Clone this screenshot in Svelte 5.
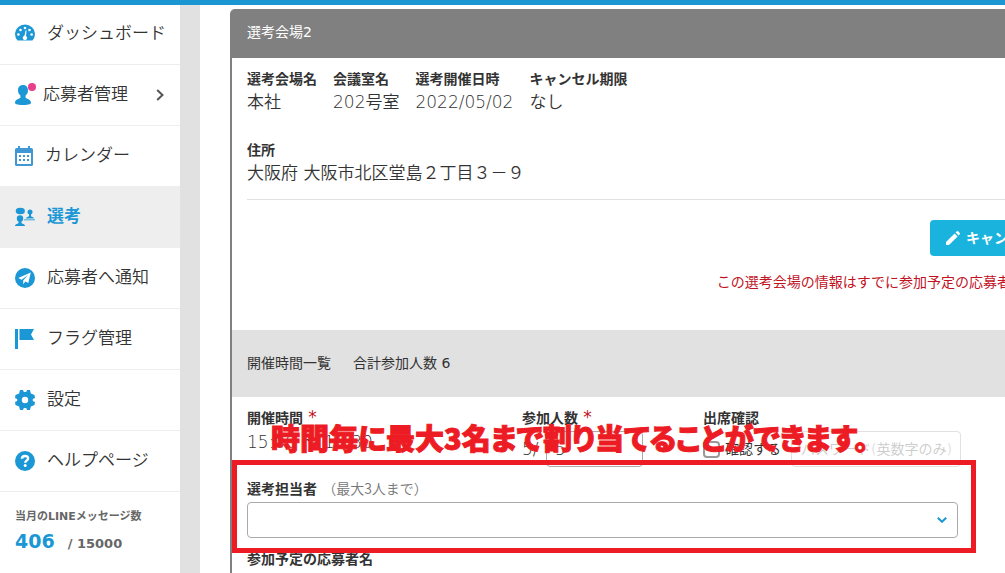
<script>
  const menu = [
    { id: 'dashboard', label: 'ダッシュボード', width: 20 },
    { id: 'applicants', label: '応募者管理', width: 16, badge: true, arrow: true },
    { id: 'calendar', label: 'カレンダー', width: 18 },
    { id: 'selection', label: '選考', width: 20, active: true },
    { id: 'notice', label: '応募者へ通知', width: 20 },
    { id: 'flag', label: 'フラグ管理', width: 20 },
    { id: 'settings', label: '設定', width: 20 },
    { id: 'help', label: 'ヘルプページ', width: 20 }
  ];

  const venue = [
    { label: '選考会場名', value: '本社' },
    { label: '会議室名', value: '202号室' },
    { label: '選考開催日時', value: '2022/05/02' },
    { label: 'キャンセル期限', value: 'なし' }
  ];

  let capacity = $state('5');
  let attendance = $state(false);
  let password = $state('');
  let staff = $state('');
</script>

<div class="topbar"></div>
<div class="page">
  <aside class="sidebar">
    <nav>
      {#each menu as item (item.id)}
        <a href="#{item.id}" class="menu-item" class:active={item.active}>
          <span class="menu-icon">
            <svg viewBox="0 0 {item.width} 20" width={item.width} height="20" aria-hidden="true">
              {#if item.id === 'dashboard'}
                <path d="M2.6 16.500A10 9.500 0 1 1 17.400 16.500Z" />
                <g fill="#fff">
                  <circle cx="10" cy="4" r="1.3" />
                  <circle cx="5.5" cy="6" r="1.3" />
                  <circle cx="14.5" cy="6" r="1.3" />
                  <circle cx="3.4" cy="10.5" r="1.3" />
                  <circle cx="16.6" cy="10.5" r="1.3" />
                  <path d="M10.6 6.4l1 .2-.6 5.400a2.200 2.200 0 1 1-1.600-.2z" />
                </g>
              {:else if item.id === 'applicants'}
                <path d="M8 0c3.2 0 5 2.2 5 5.2 0 2.3-1 4.3-2.4 5.3v2c0 1.2 5.4 1.7 5.4 5 0 1.5-1.5 2.5-8 2.5s-8-1-8-2.5c0-3.3 5.4-3.8 5.4-5v-2C4 9.500 3 7.500 3 5.200 3 2.200 4.800 0 8 0z" />
              {:else if item.id === 'calendar'}
                <g fill="#3f97d3">
                  <path fill-rule="evenodd" d="M1.5 2H3V0h2v2h8V0h2v2h1.5A1.5 1.5 0 0 1 18 3.5v15a1.5 1.5 0 0 1-1.5 1.5h-15A1.5 1.5 0 0 1 0 18.5v-15A1.5 1.5 0 0 1 1.5 2zM2 7v11h14V7z" />
                  <path d="M4 9h2v2H4zM8 9h2v2H8zM12 9h2v2h-2zM4 13h2v2H4zM8 13h2v2H8zM12 13h2v2h-2z" />
                </g>
              {:else if item.id === 'selection'}
                <ellipse cx="5.3" cy="4" rx="4.6" ry="3.2" />
                <circle cx="5" cy="11.5" r="3.2" />
                <path d="M3.5 13h3v3c0 1 3.5.8 3.5 3H0c0-2.2 3.5-2 3.5-3z" />
                <circle cx="15" cy="5" r="2.5" />
                <path d="M14 7h2v2c0 .8 3 .8 3 2.5h-8c0-1.7 3-1.7 3-2.5z" />
                <path d="M9 12h11v1.5H9z" opacity=".55" />
              {:else if item.id === 'notice'}
                <circle cx="10" cy="10" r="10" />
                <path fill="#fff" d="M15.8 4.4L3.2 10l3.5 1.8 6.2-4.9-4.7 5.6v3.7l2.1-2.6 3 1.4z" />
              {:else if item.id === 'flag'}
                <path d="M0 0h3v20H0zM4.5 0H19l-3 5.5 3 5.5H4.5z" />
              {:else if item.id === 'settings'}
                <path fill-rule="evenodd" d="M5 0h3l.8 2h2.4L12 0h3l.9 3.5L19.5 5 20 8l-2.2 1v2l2.2 1-.5 3-3.600 1.500L15 20h-3l-.8-2H8.800L8 20H5l-.9-3.500L.5 15 0 12l2.200-1V9L0 8l.5-3 3.600-1.500zM10 6.800a3.200 3.200 0 1 0 0 6.400 3.200 3.200 0 0 0 0-6.400z" />
              {:else}
                <circle cx="10" cy="10" r="10" />
                <path fill="none" stroke="#fff" stroke-width="2.4" d="M6.9 7.8C7 5.9 8.3 5 10 5c1.8 0 3.1 1 3.1 2.5 0 2.1-2.9 2.1-2.9 4.3" />
                <circle cx="10.2" cy="14.5" r="1.5" fill="#fff" />
              {/if}
            </svg>
            {#if item.badge}<span class="badge"></span>{/if}
          </span>
          <span class="menu-label">{item.label}</span>
          {#if item.arrow}
            <svg class="arrow" viewBox="0 0 8 12" width="8" height="12" aria-hidden="true">
              <path d="M1.2 1l5.3 5-5.3 5" />
            </svg>
          {/if}
        </a>
      {/each}
    </nav>
    <div class="usage">
      <div class="usage-title">当月のLINEメッセージ数</div>
      <div class="usage-count"><strong>406</strong><span>/ 15000</span></div>
    </div>
  </aside>

  <main>
    <section class="card">
      <header class="card-header">選考会場2</header>

      <div class="card-body">
        <dl class="info">
          {#each venue as field (field.label)}
            <div>
              <dt>{field.label}</dt>
              <dd>{field.value}</dd>
            </div>
          {/each}
        </dl>
        <dl class="info">
          <div>
            <dt>住所</dt>
            <dd>大阪府 大阪市北区堂島２丁目３－９</dd>
          </div>
        </dl>
        <div class="actions">
          <button type="button" class="btn">
            <svg viewBox="0 0 16 16" width="16" height="16" aria-hidden="true">
              <path d="M1 12v3h3l8.6-8.6-3-3zM10.6 2.4l3 3 1.2-1.2a1 1 0 0 0 0-1.3l-1.7-1.7a1 1 0 0 0-1.3 0z" />
            </svg>
            <span>キャンセル</span>
          </button>
          <p class="warning">この選考会場の情報はすでに参加予定の応募者がいる</p>
        </div>
      </div>

      <div class="summary">
        <span>開催時間一覧</span>
        <span>合計参加人数 6</span>
      </div>

      <div class="slot">
        <div class="slot-row">
          <div>
            <div class="label">開催時間 <span class="required">*</span></div>
            <div class="time">15:00 ～ 15:30</div>
          </div>
          <div>
            <label class="label" for="capacity">参加人数 <span class="required">*</span></label>
            <div class="control">
              <span class="joined">5/</span>
              <input id="capacity" class="box capacity" type="text" bind:value={capacity} />
            </div>
          </div>
          <div>
            <div class="label">出席確認</div>
            <div class="control">
              <input id="attendance" class="check" type="checkbox" bind:checked={attendance} />
              <label class="check-label" for="attendance">確認する</label>
              <input
                class="box password"
                type="text"
                aria-label="パスワード"
                placeholder="パスワード(英数字のみ)"
                disabled={!attendance}
                bind:value={password}
              />
            </div>
          </div>
        </div>

        <div class="staff">
          <label class="label" for="staff">選考担当者 <span class="hint">（最大3人まで）</span></label>
          <div class="select-wrap">
            <select id="staff" class="box" bind:value={staff}>
              <option value=""></option>
            </select>
            <svg class="caret" viewBox="0 0 10 6" width="10" height="6" aria-hidden="true">
              <path d="M.8.8L5 4.8 9.2.8" />
            </svg>
          </div>
          <div class="highlight"></div>
          <div class="callout">時間毎に最大3名まで割り当てることができます。</div>
        </div>

        <div class="label">参加予定の応募者名</div>
      </div>
    </section>
  </main>
</div>

<style>
  :global(body) {
    overflow: hidden;
    background: #fff;
    color: #333;
    font-family: 'DejaVu Sans', 'Noto Sans CJK JP', sans-serif;
    font-size: 14px;
    line-height: 22px;
  }

  .topbar {
    position: fixed;
    top: 0;
    left: 0;
    right: 0;
    height: 5px;
    background: #1b96d3;
    z-index: 10;
  }

  .page {
    display: flex;
    min-height: 100vh;
    padding-top: 4px;
    box-sizing: border-box;
  }

  .sidebar {
    flex: none;
    width: 180px;
    border-right: 20px solid #e1e1e1;
  }

  .menu-item {
    display: flex;
    align-items: center;
    gap: 12px;
    height: 61px;
    padding: 0 16px 0 15px;
    box-sizing: border-box;
    border-bottom: 1px solid #eee;
    color: #333;
    font-family: 'Noto Sans CJK JP', sans-serif;
    font-size: 17px;
    font-weight: 350;
    text-decoration: none;
    white-space: nowrap;
  }

  .menu-item.active {
    background: #eee;
    color: #1b97d5;
    font-weight: 700;
  }

  .menu-icon {
    position: relative;
    display: flex;
    fill: #1b97d5;
  }

  .menu-label {
    padding-bottom: 5px;
  }

  .badge {
    position: absolute;
    top: -2px;
    right: -5px;
    width: 8px;
    height: 8px;
    border-radius: 50%;
    background: #e83e8c;
  }

  .arrow {
    margin-left: auto;
    fill: none;
    stroke: #555;
    stroke-width: 2;
  }

  .usage {
    padding: 14px 15px;
    color: #666;
    font-weight: 700;
  }

  .usage-title {
    font-size: 11px;
    white-space: nowrap;
  }

  .usage-count {
    display: flex;
    align-items: baseline;
    gap: 13px;
    line-height: 26px;
    font-size: 13px;
  }

  .usage-count strong {
    color: #1b97d5;
    font-size: 19px;
  }

  main {
    flex: 1;
    min-width: 0;
    padding: 5px 0 0 30px;
    overflow: hidden;
  }

  .card {
    min-width: 840px;
    box-sizing: border-box;
    border: solid #808080;
    border-width: 0 2px;
    border-radius: 5px 5px 0 0;
  }

  .card-header {
    padding: 12px 15px 15px;
    background: #808080;
    border-radius: 3px 3px 0 0;
    color: #fff;
  }

  .card-body {
    padding: 10px 15px 37px;
  }

  .info {
    display: flex;
    gap: 16px;
    margin: 0 0 23px;
  }

  .info + .info {
    margin: 0;
    padding-bottom: 12px;
    border-bottom: 1px solid #e1e1e1;
  }

  dt,
  .label {
    display: block;
    font-family: 'Noto Sans CJK JP', sans-serif;
    font-weight: 700;
    line-height: 20px;
  }

  dd {
    margin: 0;
    font-size: 17px;
    font-weight: 350;
    line-height: 28px;
  }

  .actions {
    display: flex;
    flex-direction: column;
    align-items: flex-end;
    gap: 15px;
    padding-top: 20px;
  }

  .btn {
    display: flex;
    align-items: center;
    gap: 5px;
    height: 36px;
    padding: 0 17px 0 15px;
    border: none;
    border-radius: 4px;
    background: #1ab3de;
    color: #fff;
    font: 700 14px 'Noto Sans CJK JP', sans-serif;
    cursor: pointer;
  }

  .btn svg {
    fill: #fff;
  }

  .btn span {
    padding-bottom: 3px;
  }

  .warning {
    margin: 0;
    color: #c1121f;
    font-weight: 400;
    white-space: nowrap;
  }

  .summary {
    display: flex;
    gap: 22px;
    padding: 22px 15px 23px;
    background: #e1e1e1;
  }

  .slot {
    padding: 10px 15px;
  }

  .slot-row {
    display: grid;
    grid-template-columns: 275px 181px 1fr;
    margin-bottom: 7px;
  }

  .required {
    padding-left: 2px;
    color: #c1121f;
    font-family: 'DejaVu Sans', sans-serif;
    font-size: 17px;
    font-weight: 400;
    line-height: 1;
  }

  .time {
    font-size: 17px;
    font-weight: 350;
    line-height: 30px;
  }

  .control {
    display: flex;
    align-items: center;
    height: 44px;
  }

  .joined {
    width: 24px;
    font-size: 17px;
    font-weight: 350;
  }

  .box {
    height: 36px;
    padding: 0 12px;
    box-sizing: border-box;
    border: 1px solid #aaa;
    border-radius: 4px;
    background: #fff;
    color: #333;
    font: 350 14px 'DejaVu Sans', 'Noto Sans CJK JP', sans-serif;
  }

  .capacity {
    width: 97px;
    padding: 0 8px;
    font-size: 17px;
  }

  .check {
    appearance: none;
    width: 17px;
    height: 17px;
    margin: 0 5px 0 0;
    border: 2px solid #999;
    border-radius: 4px;
    background: #fff;
  }

  .check:checked {
    background: #1b97d5;
  }

  .check-label {
    margin-right: 10px;
  }

  .password {
    width: 170px;
    padding: 0 9px;
    border-color: #e1e1e1;
  }

  .password::placeholder {
    color: #ccc;
  }

  .staff {
    position: relative;
    max-width: 711px;
    margin-bottom: 10px;
  }

  .hint {
    padding-left: 2px;
    color: #777;
    font-weight: 350;
  }

  .select-wrap {
    display: flex;
    position: relative;
    padding-top: 4px;
  }

  .select-wrap select {
    width: 100%;
    appearance: none;
  }

  .caret {
    position: absolute;
    right: 11px;
    top: 19px;
    fill: none;
    stroke: #1b97d5;
    stroke-width: 2;
    pointer-events: none;
  }

  .highlight {
    position: absolute;
    inset: -18px -18px -15px -15px;
    border: 5px solid #ed1c24;
    pointer-events: none;
  }

  .callout {
    position: absolute;
    top: -61px;
    left: 24px;
    color: #ed1c24;
    font-family: 'Noto Sans CJK JP', sans-serif;
    font-size: 29px;
    font-weight: 900;
    font-feature-settings: 'palt';
    line-height: 40px;
    white-space: nowrap;
    -webkit-text-stroke: 1px #ed1c24;
    pointer-events: none;
  }
</style>
